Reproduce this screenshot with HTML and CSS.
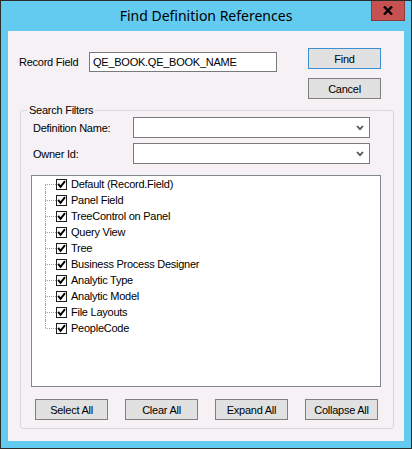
FILE: index.html
```html
<!DOCTYPE html>
<html lang="en">
<head>
  <meta charset="UTF-8">
  <title>Find Definition References</title>
  <link rel="stylesheet" href="styles.css">
</head>
<body>
  <div class="window">
    <!-- title bar -->
    <div class="titlebar">
      <span></span>
      <span class="title">Find Definition References</span>
      <button class="close" type="button">
        <svg width="10" height="9" viewBox="0 0 10 9">
          <path d="M1 0.5 L9 8.5 M9 0.5 L1 8.5" stroke="#000" stroke-width="2.4" fill="none"/>
        </svg>
      </button>
    </div>

    <div class="client">
      <!-- record field + actions -->
      <div class="top">
        <label class="field-label" for="recField">Record Field</label>
        <input class="text" id="recField" type="text" value="QE_BOOK.QE_BOOK_NAME">
        <div class="actions">
          <button class="btn default" type="button">Find</button>
          <button class="btn" type="button">Cancel</button>
        </div>
      </div>

      <fieldset class="filters">
        <legend>Search Filters</legend>

        <div class="filter-row">
          <label>Definition Name:</label>
          <div class="combo">
            <svg width="8" height="6" viewBox="0 0 8 6"><path d="M1 1 L4 4.2 L7 1" stroke="#555" stroke-width="1.8" fill="none"/></svg>
          </div>
        </div>
        <div class="filter-row">
          <label>Owner Id:</label>
          <div class="combo">
            <svg width="8" height="6" viewBox="0 0 8 6"><path d="M1 1 L4 4.2 L7 1" stroke="#555" stroke-width="1.8" fill="none"/></svg>
          </div>
        </div>

        <ul class="tree">
          <li><span class="twig"></span><span class="check"><svg width="9" height="9" viewBox="0 0 9 9"><path d="M1.2 3.8 L3.5 6.8 L8 1.2" stroke="#000" stroke-width="2" fill="none"/></svg></span>Default (Record.Field)</li>
          <li><span class="twig"></span><span class="check"><svg width="9" height="9" viewBox="0 0 9 9"><path d="M1.2 3.8 L3.5 6.8 L8 1.2" stroke="#000" stroke-width="2" fill="none"/></svg></span>Panel Field</li>
          <li><span class="twig"></span><span class="check"><svg width="9" height="9" viewBox="0 0 9 9"><path d="M1.2 3.8 L3.5 6.8 L8 1.2" stroke="#000" stroke-width="2" fill="none"/></svg></span>TreeControl on Panel</li>
          <li><span class="twig"></span><span class="check"><svg width="9" height="9" viewBox="0 0 9 9"><path d="M1.2 3.8 L3.5 6.8 L8 1.2" stroke="#000" stroke-width="2" fill="none"/></svg></span>Query View</li>
          <li><span class="twig"></span><span class="check"><svg width="9" height="9" viewBox="0 0 9 9"><path d="M1.2 3.8 L3.5 6.8 L8 1.2" stroke="#000" stroke-width="2" fill="none"/></svg></span>Tree</li>
          <li><span class="twig"></span><span class="check"><svg width="9" height="9" viewBox="0 0 9 9"><path d="M1.2 3.8 L3.5 6.8 L8 1.2" stroke="#000" stroke-width="2" fill="none"/></svg></span>Business Process Designer</li>
          <li><span class="twig"></span><span class="check"><svg width="9" height="9" viewBox="0 0 9 9"><path d="M1.2 3.8 L3.5 6.8 L8 1.2" stroke="#000" stroke-width="2" fill="none"/></svg></span>Analytic Type</li>
          <li><span class="twig"></span><span class="check"><svg width="9" height="9" viewBox="0 0 9 9"><path d="M1.2 3.8 L3.5 6.8 L8 1.2" stroke="#000" stroke-width="2" fill="none"/></svg></span>Analytic Model</li>
          <li><span class="twig"></span><span class="check"><svg width="9" height="9" viewBox="0 0 9 9"><path d="M1.2 3.8 L3.5 6.8 L8 1.2" stroke="#000" stroke-width="2" fill="none"/></svg></span>File Layouts</li>
          <li><span class="twig"></span><span class="check"><svg width="9" height="9" viewBox="0 0 9 9"><path d="M1.2 3.8 L3.5 6.8 L8 1.2" stroke="#000" stroke-width="2" fill="none"/></svg></span>PeopleCode</li>
        </ul>

        <div class="tree-buttons">
          <button class="btn" type="button">Select All</button>
          <button class="btn" type="button">Clear All</button>
          <button class="btn" type="button">Expand All</button>
          <button class="btn" type="button">Collapse All</button>
        </div>
      </fieldset>
    </div>
  </div>
</body>
</html>
```

FILE: styles.css
```css
body {
  margin: 0;
  background: #ffffff;
  font-family: "Liberation Sans", Arial, sans-serif;
  font-size: 11px;
  letter-spacing: -0.25px;
  color: #000;
}

.window {
  width: 412px;
  height: 449px;
  box-sizing: border-box;
  border: 1px solid #2b2b2b;
  background: #63cbef;
  padding: 0 7px 7px 7px;
  display: flex;
  flex-direction: column;
}

/* title bar */
.titlebar {
  height: 30px;
  display: grid;
  grid-template-columns: 1fr auto 1fr;
  align-items: start;
  margin: 0 -7px;
}

.title {
  font-family: "Noto Sans", "Open Sans", sans-serif;
  font-size: 14px;
  letter-spacing: 0;
  line-height: 30px;
  color: #000;
}

.close {
  justify-self: end;
  margin-right: 6px;
  width: 34px;
  height: 20px;
  border: 1px solid #8f3a3a;
  border-top: none;
  background: #c75050;
  padding: 0;
  display: flex;
  align-items: center;
  justify-content: center;
}

.client {
  flex: 1;
  background: #f5f1f5;
  display: flex;
  flex-direction: column;
}

/* record field row */
.top {
  display: flex;
  align-items: flex-start;
  padding: 17px 23px 0 11px;
}

.field-label {
  width: 70px;
  margin-top: 4px;
  line-height: 20px;
}

.text {
  width: 188px;
  height: 20px;
  box-sizing: border-box;
  margin: 4px 0 0 0;
  border: 1px solid #7a7a7a;
  background: #fff;
  padding: 0 0 0 3px;
  font-family: "Liberation Sans", Arial, sans-serif;
  font-size: 11px;
  letter-spacing: -0.25px;
  color: #000;
  outline: none;
}

.actions {
  margin-left: auto;
  display: flex;
  flex-direction: column;
  gap: 9px;
}

.btn {
  width: 73px;
  height: 21px;
  box-sizing: border-box;
  border: 1px solid #7f7f7f;
  background: #e1e1e1;
  padding: 0;
  font-family: "Liberation Sans", Arial, sans-serif;
  font-size: 11px;
  letter-spacing: -0.25px;
  color: #000;
}

.btn.default {
  border-color: #3c8fce;
}

/* search filters group */
.filters {
  margin: 5px 10px 0 12px;
  padding: 0 12px 8px 10px;
  border: 1px solid #d8d8dc;
  border-radius: 3px;
}

.filters legend {
  margin-left: -4px;
  padding: 0 2px;
  line-height: 13px;
}

.filter-row {
  display: flex;
  align-items: center;
  height: 21px;
  margin-bottom: 5px;
}

.filter-row label {
  width: 100px;
  padding-left: 2px;
}

.combo {
  width: 237px;
  height: 21px;
  box-sizing: border-box;
  border: 1px solid #7a7a7a;
  background: #fff;
  display: flex;
  align-items: center;
  justify-content: flex-end;
  padding-right: 5px;
}

/* tree view with checkboxes */
.tree {
  list-style: none;
  margin: 11px 0 0 0;
  height: 212px;
  box-sizing: border-box;
  border: 1px solid #828790;
  background: #fff;
  padding: 0 0 0 13px;
}

.tree li {
  height: 16px;
  display: flex;
  align-items: center;
}

.twig {
  width: 11px;
  height: 16px;
  display: flex;
  flex-direction: column;
}

.twig::before {
  content: "";
  height: 8px;
  border-left: 1px dotted #a0a0a0;
}

.twig::after {
  content: "";
  height: 8px;
  box-sizing: border-box;
  border-left: 1px dotted #a0a0a0;
  border-top: 1px dotted #a0a0a0;
}

.tree li:first-child .twig::before {
  border-left-color: transparent;
}

.tree li:last-child .twig::after {
  border-left-color: transparent;
}

.check {
  width: 11px;
  height: 11px;
  box-sizing: border-box;
  border: 1px solid #1e1e1e;
  background: #fff;
  margin-right: 4px;
  display: flex;
}

.tree-buttons {
  display: flex;
  justify-content: space-between;
  padding: 0 3px 0 4px;
  margin-top: 12px;
}
```
